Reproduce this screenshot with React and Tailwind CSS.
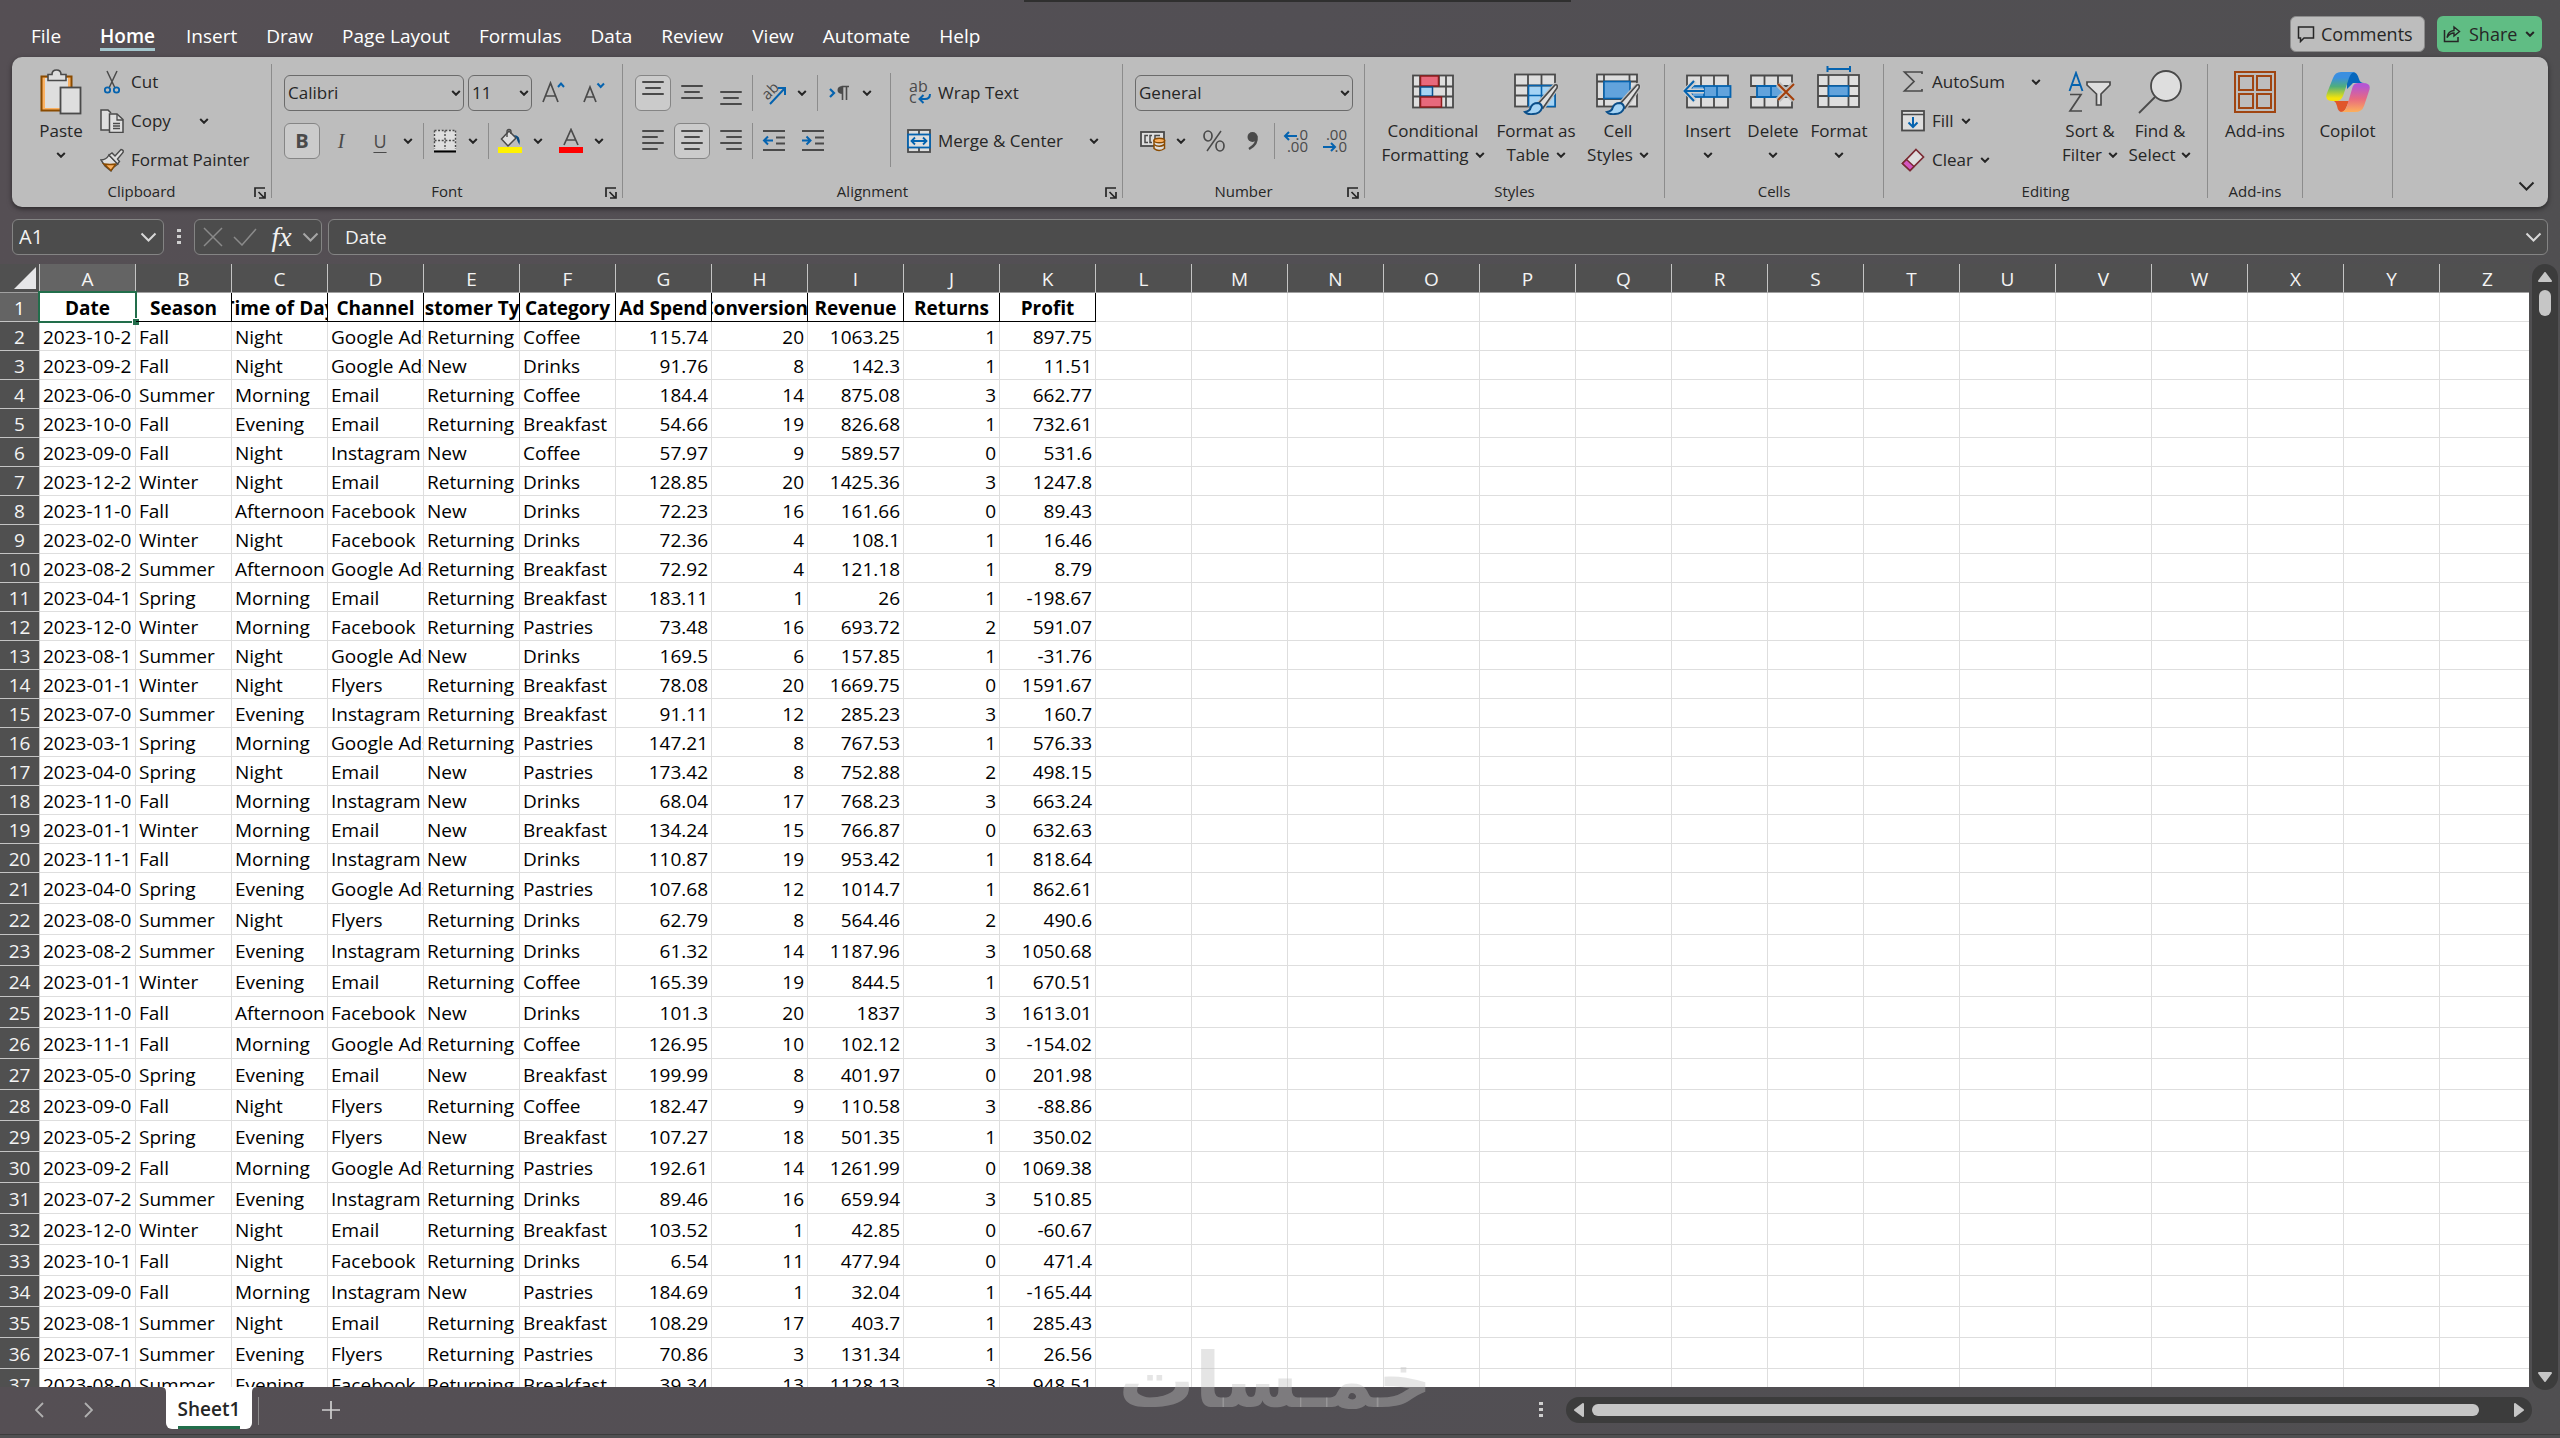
import { useState } from 'react'

const TABS = ['File', 'Home', 'Insert', 'Draw', 'Page Layout', 'Formulas', 'Data', 'Review', 'View', 'Automate', 'Help']

const COLUMNS = 'ABCDEFGHIJKLMNOPQRSTUVWXYZ'.split('')

const HEADINGS = [
  'Date', 'Season', 'Time of Day', 'Channel', 'Customer Type', 'Category',
  'Ad Spend', 'Conversions', 'Revenue', 'Returns', 'Profit',
]

const ROWS = [
  ['2023-10-2', 'Fall', 'Night', 'Google Ads', 'Returning', 'Coffee', 115.74, 20, 1063.25, 1, 897.75],
  ['2023-09-2', 'Fall', 'Night', 'Google Ads', 'New', 'Drinks', 91.76, 8, 142.3, 1, 11.51],
  ['2023-06-0', 'Summer', 'Morning', 'Email', 'Returning', 'Coffee', 184.4, 14, 875.08, 3, 662.77],
  ['2023-10-0', 'Fall', 'Evening', 'Email', 'Returning', 'Breakfast', 54.66, 19, 826.68, 1, 732.61],
  ['2023-09-0', 'Fall', 'Night', 'Instagram', 'New', 'Coffee', 57.97, 9, 589.57, 0, 531.6],
  ['2023-12-2', 'Winter', 'Night', 'Email', 'Returning', 'Drinks', 128.85, 20, 1425.36, 3, 1247.8],
  ['2023-11-0', 'Fall', 'Afternoon', 'Facebook', 'New', 'Drinks', 72.23, 16, 161.66, 0, 89.43],
  ['2023-02-0', 'Winter', 'Night', 'Facebook', 'Returning', 'Drinks', 72.36, 4, 108.1, 1, 16.46],
  ['2023-08-2', 'Summer', 'Afternoon', 'Google Ads', 'Returning', 'Breakfast', 72.92, 4, 121.18, 1, 8.79],
  ['2023-04-1', 'Spring', 'Morning', 'Email', 'Returning', 'Breakfast', 183.11, 1, 26, 1, -198.67],
  ['2023-12-0', 'Winter', 'Morning', 'Facebook', 'Returning', 'Pastries', 73.48, 16, 693.72, 2, 591.07],
  ['2023-08-1', 'Summer', 'Night', 'Google Ads', 'New', 'Drinks', 169.5, 6, 157.85, 1, -31.76],
  ['2023-01-1', 'Winter', 'Night', 'Flyers', 'Returning', 'Breakfast', 78.08, 20, 1669.75, 0, 1591.67],
  ['2023-07-0', 'Summer', 'Evening', 'Instagram', 'Returning', 'Breakfast', 91.11, 12, 285.23, 3, 160.7],
  ['2023-03-1', 'Spring', 'Morning', 'Google Ads', 'Returning', 'Pastries', 147.21, 8, 767.53, 1, 576.33],
  ['2023-04-0', 'Spring', 'Night', 'Email', 'New', 'Pastries', 173.42, 8, 752.88, 2, 498.15],
  ['2023-11-0', 'Fall', 'Morning', 'Instagram', 'New', 'Drinks', 68.04, 17, 768.23, 3, 663.24],
  ['2023-01-1', 'Winter', 'Morning', 'Email', 'New', 'Breakfast', 134.24, 15, 766.87, 0, 632.63],
  ['2023-11-1', 'Fall', 'Morning', 'Instagram', 'New', 'Drinks', 110.87, 19, 953.42, 1, 818.64],
  ['2023-04-0', 'Spring', 'Evening', 'Google Ads', 'Returning', 'Pastries', 107.68, 12, 1014.7, 1, 862.61],
  ['2023-08-0', 'Summer', 'Night', 'Flyers', 'Returning', 'Drinks', 62.79, 8, 564.46, 2, 490.6],
  ['2023-08-2', 'Summer', 'Evening', 'Instagram', 'Returning', 'Drinks', 61.32, 14, 1187.96, 3, 1050.68],
  ['2023-01-1', 'Winter', 'Evening', 'Email', 'Returning', 'Coffee', 165.39, 19, 844.5, 1, 670.51],
  ['2023-11-0', 'Fall', 'Afternoon', 'Facebook', 'New', 'Drinks', 101.3, 20, 1837, 3, 1613.01],
  ['2023-11-1', 'Fall', 'Morning', 'Google Ads', 'Returning', 'Coffee', 126.95, 10, 102.12, 3, -154.02],
  ['2023-05-0', 'Spring', 'Evening', 'Email', 'New', 'Breakfast', 199.99, 8, 401.97, 0, 201.98],
  ['2023-09-0', 'Fall', 'Night', 'Flyers', 'Returning', 'Coffee', 182.47, 9, 110.58, 3, -88.86],
  ['2023-05-2', 'Spring', 'Evening', 'Flyers', 'New', 'Breakfast', 107.27, 18, 501.35, 1, 350.02],
  ['2023-09-2', 'Fall', 'Morning', 'Google Ads', 'Returning', 'Pastries', 192.61, 14, 1261.99, 0, 1069.38],
  ['2023-07-2', 'Summer', 'Evening', 'Instagram', 'Returning', 'Drinks', 89.46, 16, 659.94, 3, 510.85],
  ['2023-12-0', 'Winter', 'Night', 'Email', 'Returning', 'Breakfast', 103.52, 1, 42.85, 0, -60.67],
  ['2023-10-1', 'Fall', 'Night', 'Facebook', 'Returning', 'Drinks', 6.54, 11, 477.94, 0, 471.4],
  ['2023-09-0', 'Fall', 'Morning', 'Instagram', 'New', 'Pastries', 184.69, 1, 32.04, 1, -165.44],
  ['2023-08-1', 'Summer', 'Night', 'Email', 'Returning', 'Breakfast', 108.29, 17, 403.7, 1, 285.43],
  ['2023-07-1', 'Summer', 'Evening', 'Flyers', 'Returning', 'Pastries', 70.86, 3, 131.34, 1, 26.56],
  ['2023-08-0', 'Summer', 'Evening', 'Facebook', 'Returning', 'Breakfast', 39.34, 13, 1128.13, 3, 948.51],
]

const INK = '#4a4a4a'
const BLUE = '#0563af'

function Svg({ w, h, children, className }) {
  return (
    <svg width={w} height={h} viewBox={`0 0 ${w} ${h}`} fill="none" aria-hidden="true" className={`shrink-0 ${className || ''}`}>
      {children}
    </svg>
  )
}

function Chevron() {
  return (
    <Svg w={10} h={6}>
      <path d="M1.2 1 L5 4.8 L8.8 1" stroke="#262626" strokeWidth="2" />
    </Svg>
  )
}

function WideChevron({ color }) {
  return (
    <Svg w={17} h={10}>
      <path d="M1.5 1.5 L8.5 8.5 L15.5 1.5" stroke={color} strokeWidth="2" />
    </Svg>
  )
}

/* ---------- clipboard icons ---------- */

function PasteIcon() {
  return (
    <Svg w={42} h={46}>
      <rect x="1.5" y="7.5" width="30" height="34" fill="#fbb161" stroke="#8a4b00" strokeWidth="2" />
      <rect x="5" y="9" width="23" height="30" fill="#dedede" />
      <path d="M8 11.5 V5.5 H12 Q12 1 16.5 1 Q21 1 21 5.5 H26 V11.5 Z" fill="#dedede" stroke={INK} strokeWidth="1.6" />
      <rect x="20.5" y="18.5" width="20" height="26" fill="#dedede" stroke={INK} strokeWidth="1.8" />
    </Svg>
  )
}

function CutIcon() {
  return (
    <Svg w={24} h={24}>
      <path d="M7 1 L15 18 M17 1 L9 18" stroke={INK} strokeWidth="1.5" />
      <circle cx="7.5" cy="20" r="2.7" stroke={BLUE} strokeWidth="1.8" />
      <circle cx="16.5" cy="20" r="2.7" stroke={BLUE} strokeWidth="1.8" />
    </Svg>
  )
}

function CopyIcon() {
  return (
    <Svg w={24} h={24}>
      <path d="M9 21 H1 V1 H8 L11 4" fill="#dedede" stroke={INK} strokeWidth="1.5" />
      <path d="M9.5 5 H17 L23 10.5 V23.5 H9.5 Z" fill="#dedede" stroke={INK} strokeWidth="1.5" />
      <path d="M17 5 V11 H23 M13 14.5 H20 M13 17 H20 M13 19.5 H20" stroke={INK} strokeWidth="1.3" />
    </Svg>
  )
}

function PainterIcon() {
  return (
    <Svg w={24} h={24}>
      <path d="M1 12 Q6 12 9 7 L18 16 Q13 19 11 23 L5 18 Z" fill="#dedede" stroke={INK} strokeWidth="1.4" />
      <path d="M4 16 Q10 17 16 16 L11 22.5 Z" fill="#fbb161" stroke="#8a4b00" strokeWidth="1.4" />
      <path d="M9 7 L12 5 L15 8 L21 1.5 Q24 2 23 4.5 L17.5 11 L19.5 13.5 L17.5 16 Z" fill="#dedede" stroke={INK} strokeWidth="1.4" />
    </Svg>
  )
}

/* ---------- font icons ---------- */

function GrowFont() {
  return (
    <Svg w={24} h={24}>
      <path d="M1 21 L8.5 2 L16 21 M3.5 15 H13.5" stroke={INK} strokeWidth="1.7" />
      <path d="M16 6 L19 2.5 L22 6" stroke={BLUE} strokeWidth="2" />
    </Svg>
  )
}

function ShrinkFont() {
  return (
    <Svg w={24} h={24}>
      <path d="M2 21 L8 6 L14 21 M4 16 H12" stroke={INK} strokeWidth="1.7" />
      <path d="M15.5 2.5 L18.7 6 L22 2.5" stroke={BLUE} strokeWidth="2" />
    </Svg>
  )
}

function BordersIcon() {
  return (
    <Svg w={24} h={24}>
      <rect x="1" y="1" width="22" height="20" fill="#dedede" />
      <path d="M1.5 1.5 H23 M1.5 11.5 H23 M1.5 1.5 V20 M12 1.5 V20 M22.5 1.5 V20" stroke={INK} strokeWidth="1.4" strokeDasharray="2 1.6" />
      <path d="M1 22.5 H23" stroke="#000" strokeWidth="2" />
    </Svg>
  )
}

function BucketIcon() {
  return (
    <Svg w={26} h={26}>
      <path d="M12 3 L19 10 L11 18 L4.5 11 Z" fill="#dedede" stroke={INK} strokeWidth="1.5" />
      <path d="M10 9 V3.5 Q10 1.5 12 1.5 Q14 1.5 14 3.5 V6" stroke={INK} strokeWidth="1.4" />
      <path d="M17 7 Q24 7 22.5 17 Q20 13 19.5 10 Z" fill="#0a4a80" />
      <rect x="1" y="19" width="24" height="6" fill="#fff200" />
    </Svg>
  )
}

function FontColorIcon() {
  return (
    <Svg w={26} h={26}>
      <path d="M6 17 L13 1.5 L20 17 M8.5 12 H17.5" stroke={INK} strokeWidth="1.7" />
      <rect x="1" y="19" width="24" height="6" fill="#ff0000" />
    </Svg>
  )
}

/* ---------- alignment icons ---------- */

function Lines({ rows }) {
  return (
    <Svg w={24} h={26}>
      {rows.map(([x, y, w]) => (
        <rect key={y} x={x} y={y} width={w} height="2" rx="1" fill={INK} />
      ))}
    </Svg>
  )
}

const TOP = [[1, 1, 22], [4, 7, 16], [1, 13, 22]]
const MIDDLE = [[1, 5, 22], [4, 11, 16], [1, 17, 22]]
const BOTTOM = [[1, 11, 22], [4, 17, 16], [1, 23, 22]]
const LEFT = [[1, 2, 22], [1, 8, 16], [1, 14, 22], [1, 20, 16]]
const CENTER = [[1, 2, 22], [4, 8, 16], [1, 14, 22], [4, 20, 16]]
const RIGHT = [[1, 2, 22], [7, 8, 16], [1, 14, 22], [7, 20, 16]]

function IndentIcon({ forward }) {
  return (
    <Svg w={24} h={24}>
      <path d="M1 2 H23 M14 8.5 H23 M14 14.5 H23 M1 21 H23" stroke={INK} strokeWidth="1.8" />
      <path d={forward ? 'M1 11.5 H9 M5.5 7.5 L9.5 11.5 L5.5 15.5' : 'M11 11.5 H2 M6 7.5 L2 11.5 L6 15.5'} stroke={BLUE} strokeWidth="2" />
    </Svg>
  )
}

function OrientationIcon() {
  return (
    <Svg w={26} h={26}>
      <text x="3" y="18" transform="rotate(-45 8 15)" fill={INK} fontSize="15">ab</text>
      <path d="M9 24 L24 8 M17 8 H24 V15" stroke={BLUE} strokeWidth="2" />
    </Svg>
  )
}

function DirectionIcon() {
  return (
    <Svg w={22} h={16}>
      <path d="M2 4 L6 8 L2 12" stroke={BLUE} strokeWidth="2.2" />
      <path d="M14.5 15 V1.5 H21 M18.5 1.5 V15" stroke={INK} strokeWidth="1.6" />
      <path d="M15 1 Q9.5 1 9.5 5 Q9.5 9 15 9 Z" fill={INK} />
    </Svg>
  )
}

function WrapIcon() {
  return (
    <Svg w={24} h={24}>
      <text x="2" y="11" fill={INK} fontSize="16">ab</text>
      <text x="2" y="22" fill={INK} fontSize="16">c</text>
      <path d="M23 13 Q23 18 18 18 H13 M16.5 14 L12.5 18 L16.5 22" stroke={BLUE} strokeWidth="2" />
    </Svg>
  )
}

function MergeIcon() {
  return (
    <Svg w={24} h={24}>
      <rect x="1" y="1" width="22" height="22" fill="#dedede" stroke={INK} strokeWidth="1.8" />
      <path d="M12 1 V23" stroke={INK} strokeWidth="1.8" />
      <rect x="1" y="5.5" width="22" height="13" fill="#dedede" stroke={BLUE} strokeWidth="1.8" />
      <path d="M4 12 H20 M8 8.5 L4.5 12 L8 15.5 M16 8.5 L19.5 12 L16 15.5" stroke={BLUE} strokeWidth="1.8" />
    </Svg>
  )
}

/* ---------- number icons ---------- */

function CurrencyIcon() {
  return (
    <Svg w={26} h={22}>
      <rect x="1" y="2" width="23" height="14" fill="#dedede" stroke={INK} strokeWidth="1.8" />
      <path d="M8 5.5 H5 V12.5 H8 M12 5.5 H10 V12.5 H12 M15 9 V5.5 H20" stroke={INK} strokeWidth="1.5" />
      <path d="M14 10.5 V18.5 Q19 22.5 24.5 18.5 V10.5 Z" fill="#dedede" stroke="#8a4b00" strokeWidth="1.5" />
      <ellipse cx="19.3" cy="10.5" rx="5.3" ry="2.3" fill="#fbb161" stroke="#8a4b00" strokeWidth="1.5" />
      <path d="M14 14.5 Q19 18 24.5 14.5" stroke="#8a4b00" strokeWidth="1.5" />
    </Svg>
  )
}

function PercentIcon() {
  return (
    <Svg w={24} h={24}>
      <ellipse cx="6" cy="7" rx="4" ry="5" stroke={INK} strokeWidth="1.7" />
      <ellipse cx="18" cy="17" rx="4" ry="5" stroke={INK} strokeWidth="1.7" />
      <path d="M19 2 L5 22" stroke={INK} strokeWidth="1.5" />
    </Svg>
  )
}

function CommaIcon() {
  return (
    <Svg w={14} h={20}>
      <circle cx="6.5" cy="6" r="5" fill={INK} />
      <path d="M10.3 5 Q12 13 3 18" stroke={INK} strokeWidth="2.5" />
    </Svg>
  )
}

function DecimalIcon({ decrease }) {
  return (
    <Svg w={26} h={26}>
      <text x="25" y="12" textAnchor="end" fill={INK} fontSize="15">{decrease ? '.00' : '.0'}</text>
      <text x="25" y="24" textAnchor="end" fill={INK} fontSize="15">{decrease ? '.0' : '.00'}</text>
      {decrease
        ? <path d="M1 19 H13 M9 15 L13 19 L9 23" stroke={BLUE} strokeWidth="2" />
        : <path d="M14 8 H2 M6 4 L2 8 L6 12" stroke={BLUE} strokeWidth="2" />}
    </Svg>
  )
}

/* ---------- styles icons ---------- */

function Brush() {
  return (
    <>
      <path d="M42 12 Q45 11 44 15 L30 35 L25 31 Z" fill="#dedede" stroke="#c0c0c0" strokeWidth="4" />
      <path d="M42 12 Q45 11 44 15 L30 35 L25 31 Z" fill="#dedede" stroke={INK} strokeWidth="1.6" />
      <path d="M25 30 Q29 31 29 35 Q27 41 20 41 Q15 42 12 39 Q17 38 17.5 35 Q19 30 25 30 Z" fill="#a5d4f5" stroke="#0b4f8a" strokeWidth="2" />
    </>
  )
}

function ConditionalIcon() {
  return (
    <Svg w={44} h={36}>
      <rect x="2" y="1.5" width="40" height="32" fill="#dedede" stroke={INK} strokeWidth="1.8" />
      <path d="M2 12.5 H42 M2 22.5 H42 M9 2 V33 M35 2 V33 M28 2 V12" stroke={INK} strokeWidth="1.8" />
      <rect x="9.5" y="2" width="18" height="10" fill="#e8697c" stroke="#8f1d1d" strokeWidth="1.5" />
      <rect x="9.5" y="13" width="12" height="9" fill="#a5d4f5" stroke="#0b4f8a" strokeWidth="1.5" />
      <rect x="9.5" y="23" width="21" height="10" fill="#e8697c" stroke="#8f1d1d" strokeWidth="1.5" />
    </Svg>
  )
}

function FormatTableIcon() {
  return (
    <Svg w={46} h={42} className="mt-1">
      <rect x="2" y="1.5" width="40" height="32" fill="#dedede" stroke={INK} strokeWidth="1.8" />
      <rect x="15" y="12.5" width="27" height="21" fill="#a5d4f5" />
      <path d="M2 12.5 H42 M2 22.5 H16 M15 2 V33 M28.5 2 V12" stroke={INK} strokeWidth="1.8" />
      <path d="M15.5 33.5 V12.5 H42 M15 22.5 H42 M28.5 12 V33 M42 12 V33.5 H28" stroke={BLUE} strokeWidth="1.6" />
      <Brush />
    </Svg>
  )
}

function CellStylesIcon() {
  return (
    <Svg w={46} h={42} className="mt-1">
      <rect x="2" y="1.5" width="40" height="32" fill="#dedede" stroke={INK} strokeWidth="1.8" />
      <path d="M2 8.5 H42 M2 26 H34 M9 2 V33 M34.5 2 V12" stroke={INK} strokeWidth="1.8" />
      <rect x="9" y="8.5" width="26" height="17" fill="#62a3dc" stroke={BLUE} strokeWidth="1.6" />
      <Brush />
    </Svg>
  )
}

/* ---------- cells icons ---------- */

function InsertCellsIcon() {
  return (
    <Svg w={50} h={36}>
      <rect x="4" y="1.5" width="41" height="32" fill="#dedede" stroke={INK} strokeWidth="1.8" />
      <path d="M18 2 V33 M31 2 V33" stroke={INK} strokeWidth="1.8" />
      <rect x="9" y="12" width="38.5" height="11" fill="#62a3dc" stroke={BLUE} strokeWidth="1.8" />
      <path d="M21 12 V23 M34 12 V23" stroke={BLUE} strokeWidth="1.6" />
      <path d="M21 17 H3 M12 7 L2 17 L12 27" stroke="#cfcfcf" strokeWidth="5" />
      <path d="M21 17 H2 M11 7 L1.5 17 L11 27" stroke={BLUE} strokeWidth="2" />
    </Svg>
  )
}

function DeleteCellsIcon() {
  return (
    <Svg w={46} h={36}>
      <path d="M1 1.5 H42 V12 H1 Z M1 23 H42 V33.5 H1 Z" fill="#dedede" stroke={INK} strokeWidth="1.8" />
      <path d="M14.5 2 V12 M28 2 V12 M14.5 23 V33 M28 23 V33" stroke={INK} strokeWidth="1.8" />
      <path d="M7 12 H29 L33 17.5 L29 23 H7 Z" fill="#62a3dc" stroke={BLUE} strokeWidth="1.8" />
      <path d="M21 12 V23" stroke={BLUE} strokeWidth="1.6" />
      <path d="M28 10 L44 26 M44 10 L28 26" stroke="#bdbdbd" strokeWidth="6" />
      <path d="M28 10 L44 26 M44 10 L28 26" stroke="#a43e08" strokeWidth="2" />
    </Svg>
  )
}

function FormatCellsIcon() {
  return (
    <Svg w={44} h={44} className="-mt-2">
      <path d="M10 3 H33 M10.500 0 V6 M33 0 V6" stroke={BLUE} strokeWidth="2" />
      <rect x="1" y="9" width="41" height="32" fill="#dedede" stroke={INK} strokeWidth="1.8" />
      <path d="M1 20 H42 M1 30 H42 M11.5 9 V41 M31.5 9 V41" stroke={INK} strokeWidth="1.8" />
      <rect x="11.5" y="20" width="20" height="10" fill="#62a3dc" stroke={BLUE} strokeWidth="1.6" />
    </Svg>
  )
}

/* ---------- editing icons ---------- */

function SigmaIcon() {
  return (
    <Svg w={24} h={24}>
      <path d="M21 4 V2 H3.5 L13 11.5 L3.5 21 H21 V19" stroke={INK} strokeWidth="1.7" />
    </Svg>
  )
}

function FillIcon() {
  return (
    <Svg w={24} h={24}>
      <rect x="1" y="2" width="22" height="19.5" fill="#dedede" stroke={INK} strokeWidth="1.8" />
      <path d="M1 5.5 H23" stroke={INK} strokeWidth="1.5" />
      <path d="M12 8 V18 M7.5 13.5 L12 18 L16.5 13.5" stroke={BLUE} strokeWidth="2" />
    </Svg>
  )
}

function ClearIcon() {
  return (
    <Svg w={24} h={24}>
      <path d="M15 1.5 L22.5 9 L9 22.5 L1.5 15.5 Z" fill="#dedede" stroke="#7a2a33" strokeWidth="1.7" />
      <path d="M5.5 11.5 L13 18.5 L9 22.5 L1.5 15.5 Z" fill="#d456c0" stroke="#7a2a33" strokeWidth="1.5" />
    </Svg>
  )
}

function SortFilterIcon() {
  return (
    <Svg w={44} h={42}>
      <path d="M1.5 20 L8 2 L14.5 20 M4 14 H12" stroke={BLUE} strokeWidth="1.9" />
      <path d="M2 23.5 H13 L2 40 H14" stroke={INK} strokeWidth="1.7" />
      <path d="M19 11 H42 V14 L33 23 V34 H28.5 V23 L19 14 Z" fill="#dedede" stroke={INK} strokeWidth="1.7" />
    </Svg>
  )
}

function FindIcon() {
  return (
    <Svg w={44} h={44}>
      <circle cx="28" cy="16" r="15" fill="#dedede" stroke={INK} strokeWidth="1.8" />
      <path d="M17 27 L1 43" stroke={INK} strokeWidth="1.8" />
    </Svg>
  )
}

function AddinsIcon() {
  return (
    <Svg w={42} h={42}>
      <rect x="1" y="1" width="40" height="40" stroke="#a04511" strokeWidth="2" />
      <path d="M5 5 H19 V19 H5 Z M23 5 H37 V19 H23 Z M5 23 H19 V37 H5 Z M23 23 H37 V37 H23 Z" stroke="#a04511" strokeWidth="2" />
    </Svg>
  )
}

function CopilotIcon() {
  return (
    <Svg w={44} h={42}>
      <defs>
        <linearGradient id="cpLeft" x1="0" y1="0" x2="0" y2="1">
          <stop offset="0.2" stopColor="#3a8fe0" />
          <stop offset="0.5" stopColor="#4fae7c" />
          <stop offset="0.9" stopColor="#f5e40a" />
        </linearGradient>
        <linearGradient id="cpRight" x1="0" y1="0" x2="0" y2="1">
          <stop offset="0.1" stopColor="#b556d2" />
          <stop offset="0.55" stopColor="#e86a80" />
          <stop offset="1" stopColor="#fdb05a" />
        </linearGradient>
      </defs>
      <path d="M21 1 H27 Q31 1 33 8 Q34 12 38 12 H27 L21 18 Z" fill="#0667bd" />
      <path d="M9 30 H23 L20 37 Q18 41 16 41 Q12 41 11 35 Q10 31 8 30 Z" fill="#e0562a" />
      <path d="M7 7 Q9 1 15 1 H29 Q25 1 23 7 L17 25 Q15 30 10 30 H7 Q-2 30 1 22 Z" fill="url(#cpLeft)" />
      <path d="M28 12 H37 Q46 12 43 20 L38 35 Q36 41 29 41 H14 Q19 41 21 35 L26 18 Q27 12 32 12" fill="url(#cpRight)" />
    </Svg>
  )
}

/* ---------- ribbon building blocks ---------- */

function Divider() {
  return <div className="mt-[7px] h-[134px] w-px shrink-0 bg-[#8c8c8c]" />
}

function ShortDivider() {
  return <div className="h-9 w-px shrink-0 bg-[#8c8c8c]" />
}

function Group({ label, launcher, className, children }) {
  return (
    <section className={`flex h-[150px] shrink-0 flex-col ${className}`}>
      <div className="h-[124px]">{children}</div>
      {label && (
        <div className="relative text-center text-[15px] leading-5">
          {label}
          {launcher && (
            <button type="button" aria-label={`${label} settings`} className="absolute right-[5px] top-[6px]">
              <Svg w={12} h={12}>
                <path d="M1 10 V1 H11 M4.5 5 L10 10.5 M11 5 V11 H5" stroke="#262626" strokeWidth="1.7" />
              </Svg>
            </button>
          )}
        </div>
      )}
    </section>
  )
}

function Tool({ label, active, children }) {
  const look = active ? 'border-[#858585] bg-[#cbcbcb]' : 'border-transparent'
  return (
    <button type="button" aria-label={label} className={`flex h-9 w-9 shrink-0 items-center justify-center rounded-md border ${look}`}>
      {children}
    </button>
  )
}

function MoreTool({ label }) {
  return (
    <button type="button" aria-label={`${label} options`} className="-ml-[2px] mr-[3px] flex h-9 w-[18px] shrink-0 items-center justify-center">
      <Chevron />
    </button>
  )
}

function TextTool({ icon, text, arrow, className }) {
  return (
    <button type="button" className={`flex items-center gap-[7px] whitespace-nowrap text-[17px] ${className || 'h-[39px]'}`}>
      {icon}
      {text}
      {arrow && <Chevron />}
    </button>
  )
}

function BigTool({ icon, lines, arrow, className }) {
  return (
    <button type="button" className={`flex shrink-0 flex-col items-center pt-[13px] text-[17px] leading-6 ${className}`}>
      <span className="mb-[5px] flex h-11 items-center justify-center">{icon}</span>
      <span className="whitespace-nowrap">{lines[0]}</span>
      <span className="flex h-6 items-center gap-[6px] whitespace-nowrap">
        {lines[1]}
        {arrow && <Chevron />}
      </span>
    </button>
  )
}

function Picker({ label, value, options, className }) {
  return (
    <div className={`relative h-9 ${className}`}>
      <select
        aria-label={label}
        defaultValue={value}
        className="h-full w-full appearance-none rounded-md border border-[#6b6b6b] bg-transparent pl-[3px] text-[17px] outline-none"
      >
        {options.map((option) => (
          <option key={option}>{option}</option>
        ))}
      </select>
      <span className="pointer-events-none absolute right-[3px] top-[15px]"><Chevron /></span>
    </div>
  )
}

function Ribbon() {
  return (
    <div className="mx-3 flex h-[150px] shrink-0 overflow-hidden rounded-[10px] bg-[#bdbdbd] text-[#262626] shadow-[0_2px_5px_rgba(0,0,0,0.5)]">
      <Group label="Clipboard" launcher className="w-[259px]">
        <div className="flex pl-[19px]">
          <BigTool icon={<PasteIcon />} lines={['Paste']} arrow className="w-[60px]" />
          <div className="flex flex-col items-start pl-[9px] pt-[5px]">
            <TextTool icon={<CutIcon />} text="Cut" />
            <div className="flex items-center gap-[26px]">
              <TextTool icon={<CopyIcon />} text="Copy" />
              <MoreTool label="Copy" />
            </div>
            <TextTool icon={<PainterIcon />} text="Format Painter" />
          </div>
        </div>
      </Group>
      <Divider />

      <Group label="Font" launcher className="w-[350px]">
        <div className="flex flex-col gap-3 pl-3 pt-[18px]">
          <div className="flex gap-1">
            <Picker label="Font" value="Calibri" options={['Calibri', 'Arial', 'Cambria']} className="w-[180px]" />
            <Picker label="Font size" value="11" options={['10', '11', '12', '14']} className="w-16" />
            <Tool label="Increase font size"><GrowFont /></Tool>
            <Tool label="Decrease font size"><ShrinkFont /></Tool>
          </div>
          <div className="flex items-center gap-[3px]">
            <Tool label="Bold" active><span className="text-xl font-bold text-[#4a4a4a]">B</span></Tool>
            <Tool label="Italic"><span className="font-['Liberation_Serif'] text-xl italic text-[#4a4a4a]">I</span></Tool>
            <Tool label="Underline"><span className="text-lg text-[#4a4a4a] underline underline-offset-4">U</span></Tool>
            <MoreTool label="Underline" />
            <ShortDivider />
            <Tool label="Borders"><BordersIcon /></Tool>
            <MoreTool label="Borders" />
            <ShortDivider />
            <Tool label="Fill colour"><BucketIcon /></Tool>
            <MoreTool label="Fill colour" />
            <Tool label="Font colour"><FontColorIcon /></Tool>
            <MoreTool label="Font colour" />
          </div>
        </div>
      </Group>
      <Divider />

      <Group label="Alignment" launcher className="w-[499px]">
        <div className="flex pl-3">
          <div className="flex w-[255px] flex-col gap-3 pt-[18px]">
            <div className="flex gap-[3px]">
              <Tool label="Top align" active><Lines rows={TOP} /></Tool>
              <Tool label="Middle align"><Lines rows={MIDDLE} /></Tool>
              <Tool label="Bottom align"><Lines rows={BOTTOM} /></Tool>
              <ShortDivider />
              <Tool label="Orientation"><OrientationIcon /></Tool>
              <MoreTool label="Orientation" />
              <ShortDivider />
              <Tool label="Text direction"><DirectionIcon /></Tool>
              <MoreTool label="Text direction" />
            </div>
            <div className="flex gap-[3px]">
              <Tool label="Align left"><Lines rows={LEFT} /></Tool>
              <Tool label="Center" active><Lines rows={CENTER} /></Tool>
              <Tool label="Align right"><Lines rows={RIGHT} /></Tool>
              <ShortDivider />
              <Tool label="Decrease indent"><IndentIcon /></Tool>
              <Tool label="Increase indent"><IndentIcon forward /></Tool>
            </div>
          </div>
          <div className="mt-4 h-[94px] w-px bg-[#8c8c8c]" />
          <div className="flex flex-col gap-3 pl-4 pt-[18px]">
            <TextTool icon={<WrapIcon />} text="Wrap Text" className="h-9" />
            <div className="flex gap-6">
              <TextTool icon={<MergeIcon />} text="Merge & Center" className="h-9" />
              <MoreTool label="Merge" />
            </div>
          </div>
        </div>
      </Group>
      <Divider />

      <Group label="Number" launcher className="w-[241px]">
        <div className="flex flex-col gap-3 pl-3 pt-[18px]">
          <Picker label="Number format" value="General" options={['General', 'Number', 'Currency', 'Date']} className="w-[218px]" />
          <div className="flex items-center gap-[3px]">
            <Tool label="Accounting format"><CurrencyIcon /></Tool>
            <MoreTool label="Accounting format" />
            <Tool label="Percent style"><PercentIcon /></Tool>
            <Tool label="Comma style"><CommaIcon /></Tool>
            <ShortDivider />
            <Tool label="Increase decimal"><DecimalIcon /></Tool>
            <Tool label="Decrease decimal"><DecimalIcon decrease /></Tool>
          </div>
        </div>
      </Group>
      <Divider />

      <Group label="Styles" className="w-[299px]">
        <div className="flex pl-[15px]">
          <BigTool icon={<ConditionalIcon />} lines={['Conditional', 'Formatting']} arrow className="w-[106px]" />
          <BigTool icon={<FormatTableIcon />} lines={['Format as', 'Table']} arrow className="w-[100px]" />
          <BigTool icon={<CellStylesIcon />} lines={['Cell', 'Styles']} arrow className="w-16" />
        </div>
      </Group>
      <Divider />

      <Group label="Cells" className="w-[218px]">
        <div className="flex pl-3">
          <BigTool icon={<InsertCellsIcon />} lines={['Insert']} arrow className="w-[62px]" />
          <BigTool icon={<DeleteCellsIcon />} lines={['Delete']} arrow className="w-[68px]" />
          <BigTool icon={<FormatCellsIcon />} lines={['Format']} arrow className="w-16" />
        </div>
      </Group>
      <Divider />

      <Group label="Editing" className="w-[323px]">
        <div className="flex pl-[17px]">
          <div className="flex w-[154px] flex-col items-start pt-[5px]">
            <div className="flex items-center gap-6">
              <TextTool icon={<SigmaIcon />} text="AutoSum" />
              <MoreTool label="AutoSum" />
            </div>
            <TextTool icon={<FillIcon />} text="Fill" arrow />
            <TextTool icon={<ClearIcon />} text="Clear" arrow />
          </div>
          <BigTool icon={<SortFilterIcon />} lines={['Sort &', 'Filter']} arrow className="w-[70px]" />
          <BigTool icon={<FindIcon />} lines={['Find &', 'Select']} arrow className="w-[70px]" />
        </div>
      </Group>
      <Divider />

      <Group label="Add-ins" className="w-[94px]">
        <BigTool icon={<AddinsIcon />} lines={['Add-ins']} className="w-full" />
      </Group>
      <Divider />

      <Group className="w-[89px]">
        <BigTool icon={<CopilotIcon />} lines={['Copilot']} className="w-full" />
      </Group>
      <Divider />

      <div className="flex flex-1 items-end justify-end pb-4 pr-[13px]">
        <button type="button" aria-label="Collapse ribbon"><WideChevron color="#262626" /></button>
      </div>
    </div>
  )
}

function TitleBar() {
  return (
    <header className="flex h-[57px] shrink-0 items-start justify-between pl-[31px] pr-[18px] pt-4">
      <nav className="mt-2 flex gap-[29px] text-[19px] leading-6 text-white">
        {TABS.map((tab) => (
          <a
            key={tab}
            href="#"
            className={tab === 'Home' ? 'ml-[10px] mr-[2px] border-b-[3px] border-[#a3c6cd] font-semibold' : 'border-b-[3px] border-transparent'}
          >
            {tab}
          </a>
        ))}
      </nav>
      <div className="flex gap-3 text-lg text-[#262626]">
        <button type="button" className="flex h-9 w-[135px] items-center gap-[6px] rounded-md border border-[#8c8c8c] bg-[#bdbdbd] pl-[6px]">
          <Svg w={18} h={18}>
            <path d="M1.5 2 H16.5 V13 H7 L3.5 16.5 V13 H1.5 Z" stroke="#262626" strokeWidth="1.5" />
          </Svg>
          Comments
        </button>
        <button type="button" className="flex h-9 w-[105px] items-center gap-2 rounded-md bg-[#60bd84] pl-[6px]">
          <Svg w={18} h={18}>
            <path d="M1.5 5 V16.5 H15 V12" stroke="#262626" strokeWidth="1.5" />
            <path d="M4 12.5 Q5 6 11 5.5 V2 L16.5 6.5 L11 11 V8 Q7 8 4 12.5 Z" stroke="#262626" strokeWidth="1.4" />
          </Svg>
          Share
          <Chevron />
        </button>
      </div>
    </header>
  )
}

function FormulaBar() {
  return (
    <div className="mx-3 mb-[9px] mt-3 flex h-9 shrink-0 items-stretch text-[#f2f2f2]">
      <div className="flex w-[152px] items-center rounded-md border border-[#848484] bg-[#4c4c4c] pr-[6px]">
        <input aria-label="Name box" defaultValue="A1" className="min-w-0 flex-1 bg-transparent pl-[6px] text-xl outline-none" />
        <WideChevron color="#d8d8d8" />
      </div>
      <div className="flex w-[30px] items-center justify-center">
        <Svg w={4} h={16}>
          <path d="M0 0 H4 V3 H0 Z M0 6 H4 V9 H0 Z M0 12 H4 V15 H0 Z" fill="#cfcfcf" />
        </Svg>
      </div>
      <div className="flex w-[128px] items-center justify-between rounded-md border border-[#848484] bg-[#4c4c4c] pl-2 pr-[2px]">
        <button type="button" aria-label="Cancel">
          <Svg w={20} h={20}><path d="M1 1 L19 19 M19 1 L1 19" stroke="#8a8a8a" strokeWidth="1.5" /></Svg>
        </button>
        <button type="button" aria-label="Enter">
          <Svg w={24} h={18}><path d="M1 9 L9 17 L23 1" stroke="#8a8a8a" strokeWidth="1.5" /></Svg>
        </button>
        <button type="button" className="pl-1 font-['Liberation_Serif'] text-[28px] italic leading-8">fx</button>
        <WideChevron color="#a6a6a6" />
      </div>
      <div className="ml-[6px] flex flex-1 items-center rounded-md border border-[#848484] bg-[#4c4c4c] pr-[5px]">
        <input aria-label="Formula" defaultValue="Date" className="min-w-0 flex-1 bg-transparent pl-4 text-[19px] outline-none" />
        <WideChevron color="#d8d8d8" />
      </div>
    </div>
  )
}

function Cell({ value }) {
  return (
    <td className={`overflow-hidden whitespace-nowrap border-b border-r border-[#dedede] px-[3px] pt-[2px] ${typeof value === 'number' ? 'text-right' : ''}`}>
      {value}
    </td>
  )
}

function Grid() {
  const blanks = COLUMNS.slice(HEADINGS.length)

  return (
    <div className="min-w-0 flex-1 overflow-hidden bg-white">
      <table className="w-[2536px] table-fixed border-separate border-spacing-0 text-[19px] leading-6 text-black">
        <thead>
          <tr className="h-[29px] bg-[#505050] text-[#f4f4f4]">
            <th aria-label="Select all" className="w-10 border-b border-r border-[#a0a0a0] border-r-[#c4c4c4] pl-[14px]">
              <Svg w={22} h={22}><path d="M22 0 V22 H0 Z" fill="#e6e6e8" /></Svg>
            </th>
            {COLUMNS.map((name) => (
              <th
                key={name}
                scope="col"
                className={`w-24 border-b border-r border-[#a0a0a0] border-r-[#c4c4c4] pt-[2px] font-normal ${name === 'A' ? 'bg-[#646464]' : ''}`}
              >
                {name}
              </th>
            ))}
          </tr>
        </thead>
        <tbody>
          <tr className="h-[29px]">
            <th scope="row" className="border-b border-r border-[#c4c4c4] bg-[#646464] pt-[2px] font-normal text-white">1</th>
            {HEADINGS.map((heading, i) => (
              <td key={heading} className="relative border-b border-r border-black pt-[2px] font-bold">
                <div className="flex justify-center overflow-hidden whitespace-nowrap">{heading}</div>
                {i === 0 && (
                  <>
                    <div className="absolute -bottom-[2px] -left-[2px] -right-[2px] -top-[2px] border-2 border-[#226e4b]" />
                    <div className="absolute -bottom-[4px] -right-[4px] h-[7px] w-[7px] border-l border-t border-white bg-[#226e4b]" />
                  </>
                )}
              </td>
            ))}
            {blanks.map((name) => <Cell key={name} />)}
          </tr>
          {ROWS.map((row, i) => (
            <tr key={i} className={i < 19 ? 'h-[29px]' : 'h-[31px]'}>
              <th scope="row" className="border-b border-r border-[#c4c4c4] bg-[#505050] pt-[2px] font-normal text-[#f4f4f4]">{i + 2}</th>
              {row.map((value, col) => <Cell key={COLUMNS[col]} value={value} />)}
              {blanks.map((name) => <Cell key={name} />)}
            </tr>
          ))}
        </tbody>
      </table>
    </div>
  )
}

function VerticalScroll() {
  return (
    <div className="relative z-10 -mb-[3px] ml-[3px] mr-[2px] flex w-[26px] shrink-0 flex-col items-center rounded-full bg-[#3c3c3c] py-2">
      <button type="button" aria-label="Scroll up">
        <Svg w={14} h={10}><path d="M7 1 L13 9 H1 Z" fill="#c6c6c6" stroke="#c6c6c6" strokeLinejoin="round" strokeWidth="2" /></Svg>
      </button>
      <div className="mt-2 h-[26px] w-3 rounded-full bg-[#c6c6c6]" />
      <button type="button" aria-label="Scroll down" className="mt-auto">
        <Svg w={14} h={10}><path d="M7 9 L13 1 H1 Z" fill="#c6c6c6" stroke="#c6c6c6" strokeLinejoin="round" strokeWidth="2" /></Svg>
      </button>
    </div>
  )
}

function SheetBar({ sheet }) {
  return (
    <footer className="relative flex h-12 shrink-0 items-start border-b border-[#3c3c3c]">
      <div className="flex h-[46px] w-[161px] items-center gap-10 pl-[35px]">
        <button type="button" aria-label="Previous sheet">
          <Svg w={9} h={16}><path d="M8 1 L1 8 L8 15" stroke="#b0b0b0" strokeWidth="1.8" /></Svg>
        </button>
        <button type="button" aria-label="Next sheet">
          <Svg w={9} h={16}><path d="M1 1 L8 8 L1 15" stroke="#b0b0b0" strokeWidth="1.8" /></Svg>
        </button>
      </div>
      <Svg w={5} h={5}><path d="M0 0 H5 V5 Q5 0 0 0 Z" fill="#fff" /></Svg>
      <button type="button" className="flex h-[42px] w-[86px] justify-center rounded-b-md bg-white pt-[10px] text-[19px] font-semibold text-[#262626]">
        <span className="border-b-[3px] border-[#226e4b] leading-6">{sheet}</span>
      </button>
      <Svg w={5} h={5}><path d="M5 0 H0 V5 Q0 0 5 0 Z" fill="#fff" /></Svg>
      <div className="ml-px mt-[10px] h-7 w-px bg-[#8c8c8c]" />
      <button type="button" aria-label="New sheet" className="ml-[63px] flex h-[46px] items-center">
        <Svg w={18} h={18}><path d="M9 0 V18 M0 9 H18" stroke="#cfcfcf" strokeWidth="1.7" /></Svg>
      </button>

      <div className="ml-auto mr-7 flex w-[993px] items-center pt-[10px]">
        <Svg w={4} h={16}>
          <path d="M0 0 H4 V3 H0 Z M0 6 H4 V9 H0 Z M0 12 H4 V15 H0 Z" fill="#cfcfcf" />
        </Svg>
        <div className="ml-[23px] flex h-[26px] flex-1 items-center rounded-full bg-[#3c3c3c] px-2">
          <button type="button" aria-label="Scroll left">
            <Svg w={10} h={14}><path d="M1 7 L9 1 V13 Z" fill="#c6c6c6" stroke="#c6c6c6" strokeLinejoin="round" strokeWidth="2" /></Svg>
          </button>
          <div className="ml-2 mr-[35px] h-3 flex-1 rounded-full bg-[#c6c6c6]" />
          <button type="button" aria-label="Scroll right">
            <Svg w={10} h={14}><path d="M9 7 L1 1 V13 Z" fill="#c6c6c6" stroke="#c6c6c6" strokeLinejoin="round" strokeWidth="2" /></Svg>
          </button>
        </div>
      </div>

      <div
        dir="rtl"
        lang="ar"
        className="pointer-events-none absolute -top-[48px] left-[44%] w-[306px] whitespace-nowrap text-center font-['DejaVu_Sans'] text-[76px] font-bold leading-[84px] text-[#bfbfbf]/40"
      >
        خمـسات
      </div>
    </footer>
  )
}

export default function App() {
  const [sheet] = useState('Sheet1')

  return (
    <div className="relative flex h-screen flex-col overflow-hidden bg-linear-to-r from-[#554f54] via-[#524f54] to-[#504f51] font-['Open_Sans',sans-serif]">
      <div className="absolute left-[40%] top-0 h-[2px] w-[547px] bg-[#2f2f2f]" />
      <TitleBar />
      <Ribbon />
      <FormulaBar />
      <main className="flex min-h-0 flex-1">
        <Grid />
        <VerticalScroll />
      </main>
      <SheetBar sheet={sheet} />
      <div className="h-[3px] shrink-0 bg-[#505052]" />
    </div>
  )
}
